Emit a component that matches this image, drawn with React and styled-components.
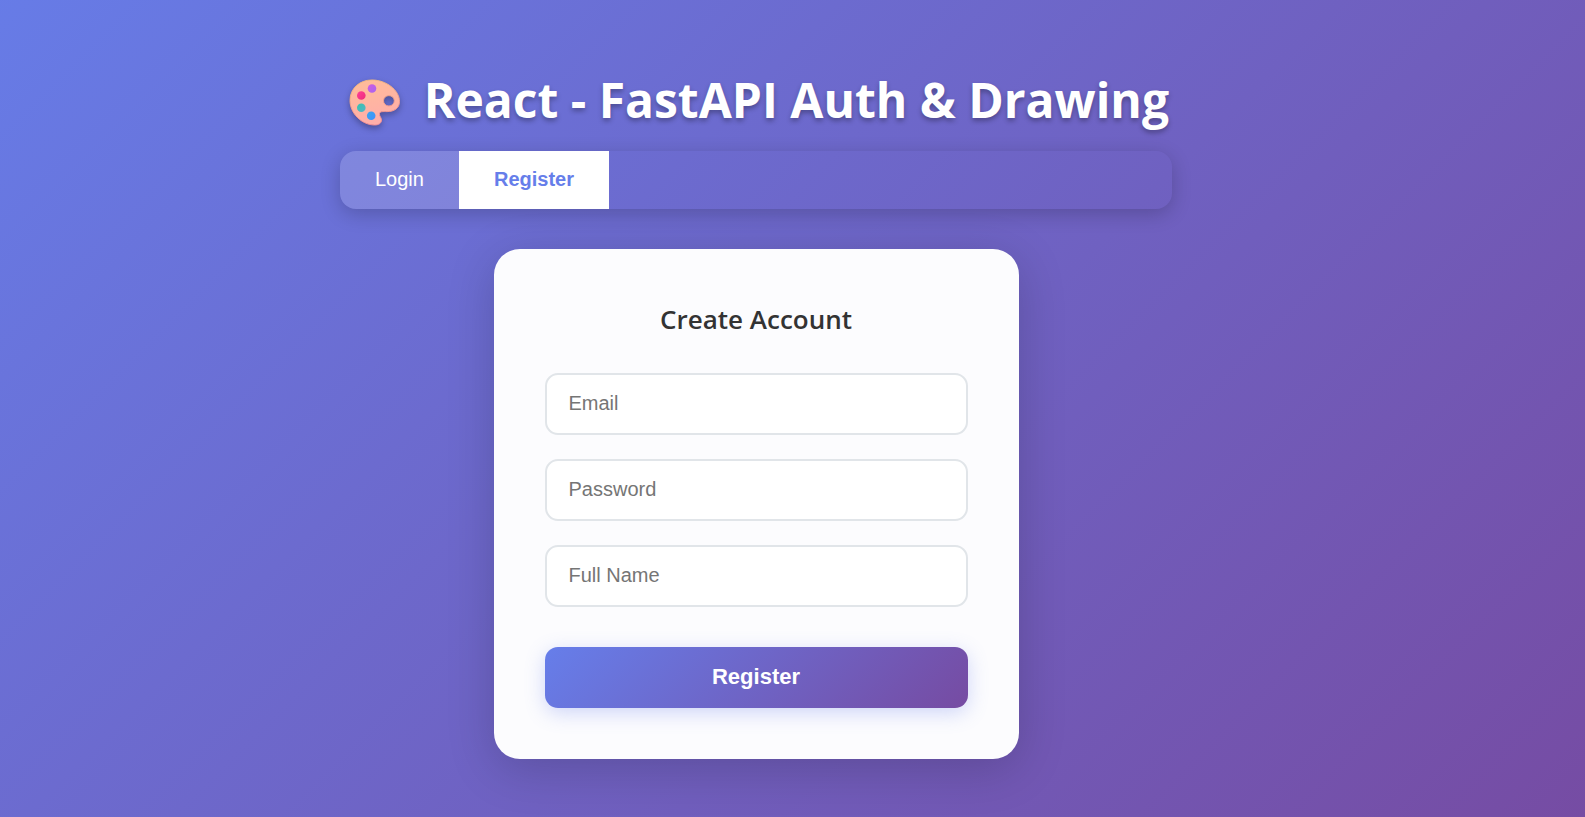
import React, { useState } from "react";
import styled, { createGlobalStyle, css } from "styled-components";

const GlobalStyle = createGlobalStyle`
  *, *::before, *::after { box-sizing: border-box; }
  html {
    min-height: 100%;
    background: linear-gradient(135deg, #667eea 0%, #764ba2 100%) right center / calc(100% + 73px) calc(100% + 100px) no-repeat;
  }
  body { margin: 0; font-family: "Segoe UI", "Open Sans", "Noto Sans", sans-serif; }
`;

const Page = styled.div`
  min-height: 100vh;
  display: flex;
  justify-content: center;
  padding: 66px 73px 56px 0;
`;

const Column = styled.main`
  width: 100%;
  max-width: 832px;
  display: flex;
  flex-direction: column;
  align-items: center;
`;

const Title = styled.h1`
  align-self: stretch;
  display: flex;
  align-items: center;
  justify-content: space-between;
  margin: 0 0 17px;
  padding: 0 3px 0 9px;
  color: #fff;
  font-size: 48px;
  font-weight: 700;
  line-height: 68px;
  white-space: nowrap;
  text-shadow: 0 3px 5px rgba(0, 0, 0, 0.3);
`;

const Palette = styled.svg`
  flex: none;
  width: 54px;
  height: 46px;
  margin-top: 5px;
  overflow: visible;
  filter: drop-shadow(0 3px 3px rgba(0, 0, 0, 0.3));
`;

const Tabs = styled.nav`
  align-self: stretch;
  display: flex;
  height: 58px;
  margin-bottom: 40px;
  border-radius: 16px;
  overflow: hidden;
  box-shadow: 0 5px 20px rgba(0, 0, 0, 0.2);
`;

const Tab = styled.button`
  border: 0;
  padding: 0 35px 2px;
  font-family: Arial, "Liberation Sans", sans-serif;
  font-size: 20px;
  color: #fff;
  background: rgba(255, 255, 255, 0.15);
  cursor: pointer;
  ${(p) =>
    p.$active &&
    css`
      color: #667eea;
      background: #fff;
      font-weight: 700;
    `}
`;

const Card = styled.form`
  width: 100%;
  max-width: 525px;
  display: flex;
  flex-direction: column;
  gap: 24px;
  padding: 51px;
  border-radius: 26px;
  background: #fcfcfe;
  box-shadow: 0 10px 48px rgba(0, 0, 0, 0.18);
`;

const CardTitle = styled.h2`
  margin: 0 0 10px;
  color: #333;
  font-size: 26px;
  font-weight: 600;
  line-height: 39px;
  text-align: center;
`;

const Field = styled.input`
  width: 100%;
  height: 62px;
  padding: 0 22px 2px;
  border: 2px solid #e1e5e9;
  border-radius: 13px;
  background: #fff;
  color: #333;
  font-family: Arial, "Liberation Sans", sans-serif;
  font-size: 20px;
  &::placeholder { color: #757575; }
  &:focus { outline: none; border-color: #667eea; }
`;

const Submit = styled.button`
  height: 61px;
  margin-top: 16px;
  padding: 0 0 2px;
  border: 0;
  border-radius: 13px;
  color: #fff;
  background: linear-gradient(135deg, #667eea 0%, #764ba2 100%);
  box-shadow: 0 5px 20px rgba(102, 126, 234, 0.3);
  font-family: Arial, "Liberation Sans", sans-serif;
  font-size: 22px;
  font-weight: 700;
  cursor: pointer;
`;

function PaletteIcon() {
  return (
    <Palette viewBox="0 2 54 46" aria-hidden="true">
      <defs>
        <linearGradient id="board" x1="0" y1="0" x2="0.3" y2="1">
          <stop offset="0" stopColor="#ffbd98" />
          <stop offset="1" stopColor="#ffaea9" />
        </linearGradient>
        <linearGradient id="rim" x1="0" y1="0" x2="0.2" y2="1">
          <stop offset="0" stopColor="#f5bd7c" />
          <stop offset="1" stopColor="#f08d96" />
        </linearGradient>
        <linearGradient id="violet" x1="0" y1="0" x2="1" y2="1">
          <stop offset="0" stopColor="#d15be0" />
          <stop offset="1" stopColor="#a765f0" />
        </linearGradient>
        <linearGradient id="pink" x1="0" y1="0" x2="1" y2="1">
          <stop offset="0" stopColor="#ff3f96" />
          <stop offset="1" stopColor="#ee2a7c" />
        </linearGradient>
        <linearGradient id="teal" x1="0" y1="0" x2="1" y2="1">
          <stop offset="0" stopColor="#35c4ad" />
          <stop offset="1" stopColor="#55b3c7" />
        </linearGradient>
        <linearGradient id="blue" x1="0" y1="0" x2="1" y2="1">
          <stop offset="0" stopColor="#3aa5ee" />
          <stop offset="1" stopColor="#4290ff" />
        </linearGradient>
      </defs>
      <path
        fill="url(#board)"
        stroke="url(#rim)"
        strokeWidth="1"
        fillRule="evenodd"
        d="M23 2C10.500 2 1 10.500 1 22.500C1 35.500 13 47 25.500 47C30 47 32.500 45 32.500 42C32.500 39.500 30 38 30.500 35.500C31 33.200 34 33.600 38 33.600C45.500 33.600 50.500 30 50.500 23.500C50.500 12 37 2 23 2ZM34.500 22.800A5.400 5.200 0 1 0 45.300 22.800A5.400 5.200 0 1 0 34.500 22.800Z"
      />
      <circle cx="23" cy="10.500" r="4.300" fill="url(#violet)" />
      <circle cx="12.300" cy="17.500" r="4.300" fill="url(#pink)" />
      <circle cx="12.300" cy="29.700" r="4.300" fill="url(#teal)" />
      <circle cx="22.200" cy="37.800" r="4.300" fill="url(#blue)" />
    </Palette>
  );
}

const MODES = {
  Login: { heading: "Welcome Back", fields: ["Email", "Password"] },
  Register: { heading: "Create Account", fields: ["Email", "Password", "Full Name"] },
};

const TYPES = { Email: "email", Password: "password", "Full Name": "text" };

export default function App() {
  const [mode, setMode] = useState("Register");
  const { heading, fields } = MODES[mode];

  return (
    <>
      <GlobalStyle />
      <Page>
        <Column>
          <Title>
            <PaletteIcon />
            <span>React - FastAPI Auth &amp; Drawing</span>
          </Title>
          <Tabs>
            {Object.keys(MODES).map((name) => (
              <Tab key={name} type="button" $active={name === mode} onClick={() => setMode(name)}>
                {name}
              </Tab>
            ))}
          </Tabs>
          <Card onSubmit={(e) => e.preventDefault()}>
            <CardTitle>{heading}</CardTitle>
            {fields.map((name) => (
              <Field key={name} type={TYPES[name]} placeholder={name} aria-label={name} />
            ))}
            <Submit type="submit">{mode}</Submit>
          </Card>
        </Column>
      </Page>
    </>
  );
}
